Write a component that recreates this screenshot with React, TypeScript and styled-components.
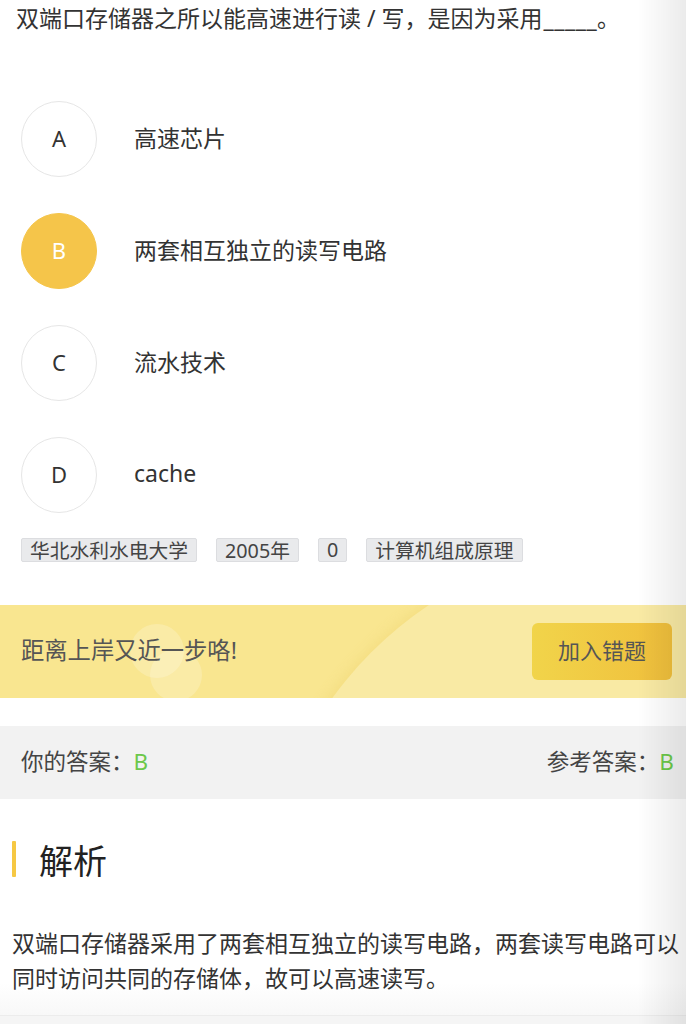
import React from "react";
import styled, { createGlobalStyle } from "styled-components";

const GlobalStyle = createGlobalStyle`
  html, body {
    margin: 0;
    padding: 0;
    background: #f5f5f5;
  }
  body {
    font-family: "Noto Sans", "Noto Sans CJK SC", sans-serif;
    color: #333;
  }
`;

const options = [
  { key: "A", text: "高速芯片" },
  { key: "B", text: "两套相互独立的读写电路" },
  { key: "C", text: "流水技术" },
  { key: "D", text: "cache" },
];

const tags = ["华北水利水电大学", "2005年", "0", "计算机组成原理"];

const selected = "B";

export default function App() {
  return (
    <>
      <GlobalStyle />
      <Page>
        <Question>
          双端口存储器之所以能高速进行读 / 写，是因为采用<Blank>_____</Blank>。
        </Question>

        <OptionList>
          {options.map((o) => (
            <OptionRow key={o.key}>
              <Circle $active={o.key === selected}>{o.key}</Circle>
              <OptionText>{o.text}</OptionText>
            </OptionRow>
          ))}
        </OptionList>

        <TagRow>
          {tags.map((t) => (
            <Tag key={t}>{t}</Tag>
          ))}
        </TagRow>

        <Banner>
          <Arc />
          <Bubble $x={130} $y={19} $size={54} />
          <Bubble $x={150} $y={44} $size={52} />
          <BannerText>距离上岸又近一步咯!</BannerText>
          <AddButton>加入错题</AddButton>
        </Banner>

        <AnswerBar>
          <AnswerItem>
            你的答案：<Green>B</Green>
          </AnswerItem>
          <AnswerItem>
            参考答案：<Green>B</Green>
          </AnswerItem>
        </AnswerBar>

        <Analysis>
          <SectionTitle>解析</SectionTitle>
          <AnalysisText>
            双端口存储器采用了两套相互独立的读写电路，两套读写电路可以同时访问共同的存储体，故可以高速读写。
          </AnalysisText>
        </Analysis>
      </Page>
      <EdgeShade />
    </>
  );
}

const Page = styled.div`
  width: 686px;
  background: #fff;
  overflow: hidden;
`;

const Question = styled.div`
  padding: 2px 16px 0;
  font-size: 23px;
  line-height: 32px;
  color: #333;
  white-space: nowrap;
`;

const Blank = styled.span`
  letter-spacing: 0.5px;
  margin-left: 1px;
`;

const OptionList = styled.div`
  display: flex;
  flex-direction: column;
  gap: 36px;
  margin-top: 67px;
  padding-left: 21px;
`;

const OptionRow = styled.div`
  display: flex;
  align-items: center;
  height: 76px;
`;

const Circle = styled.div<{ $active?: boolean }>`
  width: 76px;
  height: 76px;
  box-sizing: border-box;
  border-radius: 50%;
  display: flex;
  align-items: center;
  justify-content: center;
  padding-bottom: 2px;
  font-size: 22px;
  color: ${(p) => (p.$active ? "#fff" : "#333")};
  background: ${(p) => (p.$active ? "#f5c54a" : "#fff")};
  border: 1px solid ${(p) => (p.$active ? "#f5c54a" : "#e6e6e6")};
`;

const OptionText = styled.div`
  margin-left: 37px;
  padding-bottom: 4px;
  font-size: 23px;
  color: #333;
`;

const TagRow = styled.div`
  display: flex;
  gap: 19px;
  margin-top: 25px;
  padding-left: 21px;
`;

const Tag = styled.span`
  box-sizing: border-box;
  height: 24px;
  padding: 0 8px 2px;
  display: flex;
  align-items: center;
  font-size: 19.75px;
  color: #444;
  background: #e9eaec;
  border: 1px solid #dcdde0;
  border-radius: 2px;
`;

const Banner = styled.div`
  position: relative;
  overflow: hidden;
  height: 93px;
  margin-top: 43px;
  padding: 0 14px 0 21px;
  display: flex;
  align-items: center;
  justify-content: space-between;
  background: #f9e690;
`;

const Arc = styled.div`
  position: absolute;
  left: 260px;
  top: -64px;
  width: 760px;
  height: 760px;
  border-radius: 50%;
  background: #f9eaa4;
  box-shadow: -5px 0 12px rgba(235, 205, 100, 0.3);
`;

const Bubble = styled.div<{ $x: number; $y: number; $size: number }>`
  position: absolute;
  left: ${(p) => p.$x}px;
  top: ${(p) => p.$y}px;
  width: ${(p) => p.$size}px;
  height: ${(p) => p.$size}px;
  border-radius: 50%;
  background: rgba(255, 255, 255, 0.2);
`;

const BannerText = styled.div`
  position: relative;
  padding-bottom: 6px;
  font-size: 23.3px;
  color: #555;
`;

const AddButton = styled.div`
  position: relative;
  width: 140px;
  height: 57px;
  box-sizing: border-box;
  padding-bottom: 5px;
  border-radius: 6px;
  display: flex;
  align-items: center;
  justify-content: center;
  font-size: 22px;
  color: #555;
  background: linear-gradient(to right, #f1d44a, #f0bf3c);
`;

const AnswerBar = styled.div`
  margin-top: 28px;
  height: 73px;
  padding: 0 12px 0 21px;
  display: flex;
  align-items: center;
  justify-content: space-between;
  background: #f2f2f2;
`;

const AnswerItem = styled.div`
  padding-bottom: 5px;
  font-size: 22.5px;
  color: #444;
`;

const Green = styled.span`
  color: #6cc84a;
`;

const Analysis = styled.div`
  padding: 42px 0 19px 12px;
  background: linear-gradient(to bottom, #fff 85%, #f8f8f8);
  border-bottom: 1px solid #ececec;
`;

const SectionTitle = styled.div`
  display: flex;
  align-items: center;
  height: 36px;
  font-size: 34px;
  color: #222;

  &::before {
    content: "";
    width: 4px;
    height: 36px;
    margin-right: 23px;
    background: #f6c843;
    border-radius: 1px;
  }
`;

const AnalysisText = styled.div`
  margin-top: 49px;
  font-size: 23px;
  line-height: 35px;
  color: #333;
`;

const EdgeShade = styled.div`
  position: fixed;
  top: 0;
  right: 0;
  width: 48px;
  height: 100vh;
  pointer-events: none;
  background: linear-gradient(to right, rgba(0, 0, 0, 0), rgba(0, 0, 0, 0.08));
`;
